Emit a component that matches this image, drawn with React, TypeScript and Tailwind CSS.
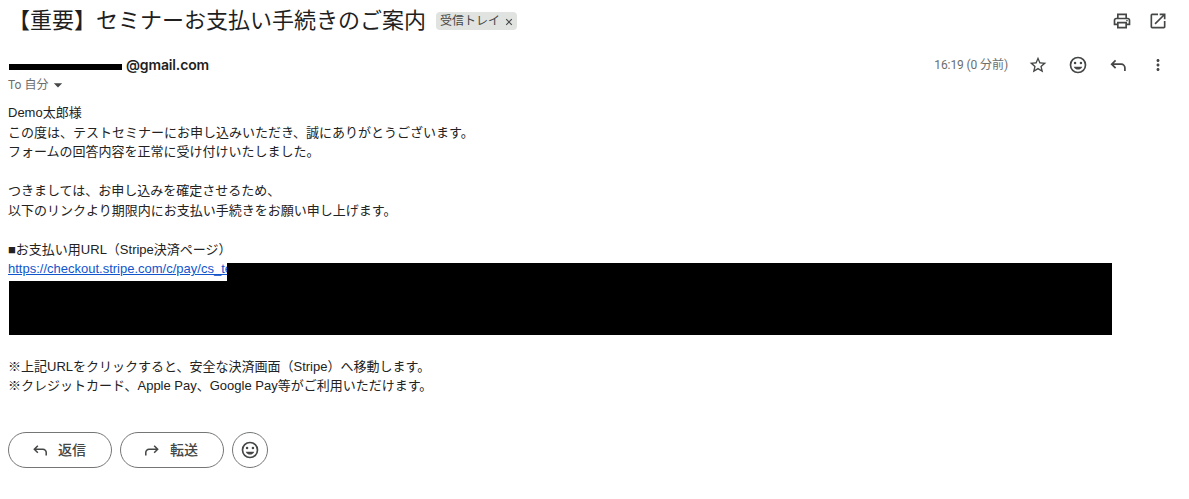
import type { ReactNode } from "react";
import { MdArrowDropDown, MdMoreVert, MdOpenInNew, MdOutlinePrint, MdStarBorder } from "react-icons/md";

function ReplyIcon({ className = "h-5 w-5" }: { className?: string }) {
  return (
    <svg viewBox="0 0 20 20" className={className} fill="none" stroke="currentColor" strokeWidth="1.7">
      <path d="M7.6 5.3 3.7 9.2l3.9 3.9M3.9 9.2h9.4a3.6 3.6 0 0 1 3.6 3.6v3.2" />
    </svg>
  );
}

function SmileIcon() {
  return (
    <svg viewBox="0 0 24 24" className="h-5 w-5" fill="currentColor">
      <circle cx="12" cy="12" r="9" fill="none" stroke="currentColor" strokeWidth="2" />
      <circle cx="8.5" cy="9.5" r="1.5" />
      <circle cx="15.5" cy="9.5" r="1.5" />
      <path d="M6.9 14h10.2c-.8 2.1-2.8 3.5-5.1 3.5S7.7 16.1 6.9 14z" />
    </svg>
  );
}

function IconButton({ label, children }: { label: string; children: ReactNode }) {
  return (
    <button type="button" aria-label={label} className="flex h-5 w-5 items-center justify-center">
      {children}
    </button>
  );
}

function PillButton({ icon, children }: { icon: ReactNode; children: ReactNode }) {
  return (
    <button
      type="button"
      className="flex h-9 w-26 items-center gap-[9px] rounded-full border border-[#747775] pl-[22px] text-sm font-medium"
    >
      {icon}
      {children}
    </button>
  );
}

export default function App() {
  return (
    <main className="h-[499px] bg-white pr-[21px] pl-2 font-['Roboto','Noto_Sans_CJK_JP',sans-serif] text-[#444746]">
      <header className="flex h-[42px] items-center">
        <h1 className="text-[22px] leading-7 text-[#1f1f1f]">【重要】セミナーお支払い手続きのご案内</h1>
        <span className="ml-2.5 flex h-[18px] w-[81px] items-center justify-between rounded bg-[#e1e3e1] px-1 text-xs">
          受信トレイ
          <svg viewBox="0 0 8 8" className="mt-0.5 h-2 w-2" stroke="currentColor" strokeWidth="1.1">
            <path d="m1.2 1.2 5.6 5.6M6.8 1.2 1.2 6.8" />
          </svg>
        </span>
        <div className="ml-auto flex gap-4">
          <IconButton label="Print">
            <MdOutlinePrint size={20} />
          </IconButton>
          <IconButton label="Open in new window">
            <MdOpenInNew size={20} />
          </IconButton>
        </div>
      </header>

      <div className="mt-3 flex h-[22px] items-center">
        <span className="mt-[3px] ml-px h-1.5 w-[113px] bg-black" />
        <span className="ml-1 font-['Inter',sans-serif] text-sm font-semibold tracking-[-0.15px] text-[#1f1f1f]">
          @gmail.com
        </span>
        <div className="ml-auto flex items-center gap-5">
          <span className="text-xs tracking-[-0.1px] text-[#6b6e6d]">16:19 (0 分前)</span>
          <IconButton label="Star">
            <MdStarBorder size={20} />
          </IconButton>
          <IconButton label="React">
            <SmileIcon />
          </IconButton>
          <IconButton label="Reply">
            <ReplyIcon />
          </IconButton>
          <IconButton label="More">
            <MdMoreVert size={18} />
          </IconButton>
        </div>
      </div>

      <div className="flex h-[18px] items-center text-xs text-[#6b6e6d]">
        To 自分
        <MdArrowDropDown size={20} className="text-[#444746]" />
      </div>

      <article className="relative mt-[9px] font-['Liberation_Sans','Noto_Sans_CJK_JP',sans-serif] text-[13px] leading-[19.5px] text-[#222222]">
        <p>Demo太郎様</p>
        <p>この度は、テストセミナーにお申し込みいただき、誠にありがとうございます。</p>
        <p>フォームの回答内容を正常に受け付けいたしました。</p>
        <br />
        <p>つきましては、お申し込みを確定させるため、</p>
        <p>以下のリンクより期限内にお支払い手続きをお願い申し上げます。</p>
        <br />
        <p>■お支払い用URL（Stripe決済ページ）</p>
        <p className="text-[#1155cc] underline">https://checkout.stripe.com/c/pay/cs_te</p>
        <div className="h-[58.5px]" />
        <div className="absolute top-[160px] left-[219px] h-[72px] w-[885px] bg-black" />
        <div className="absolute top-[178px] left-[1px] h-[54px] w-[218px] bg-black" />
        <br />
        <p>※上記URLをクリックすると、安全な決済画面（Stripe）へ移動します。</p>
        <p>※クレジットカード、Apple Pay、Google Pay等がご利用いただけます。</p>
      </article>

      <footer className="mt-9 flex gap-2">
        <PillButton icon={<ReplyIcon className="h-[18px] w-[18px]" />}>返信</PillButton>
        <PillButton icon={<ReplyIcon className="h-[18px] w-[18px] -scale-x-100" />}>転送</PillButton>
        <button
          type="button"
          aria-label="React"
          className="flex h-9 w-9 items-center justify-center rounded-full border border-[#747775]"
        >
          <SmileIcon />
        </button>
      </footer>
    </main>
  );
}
